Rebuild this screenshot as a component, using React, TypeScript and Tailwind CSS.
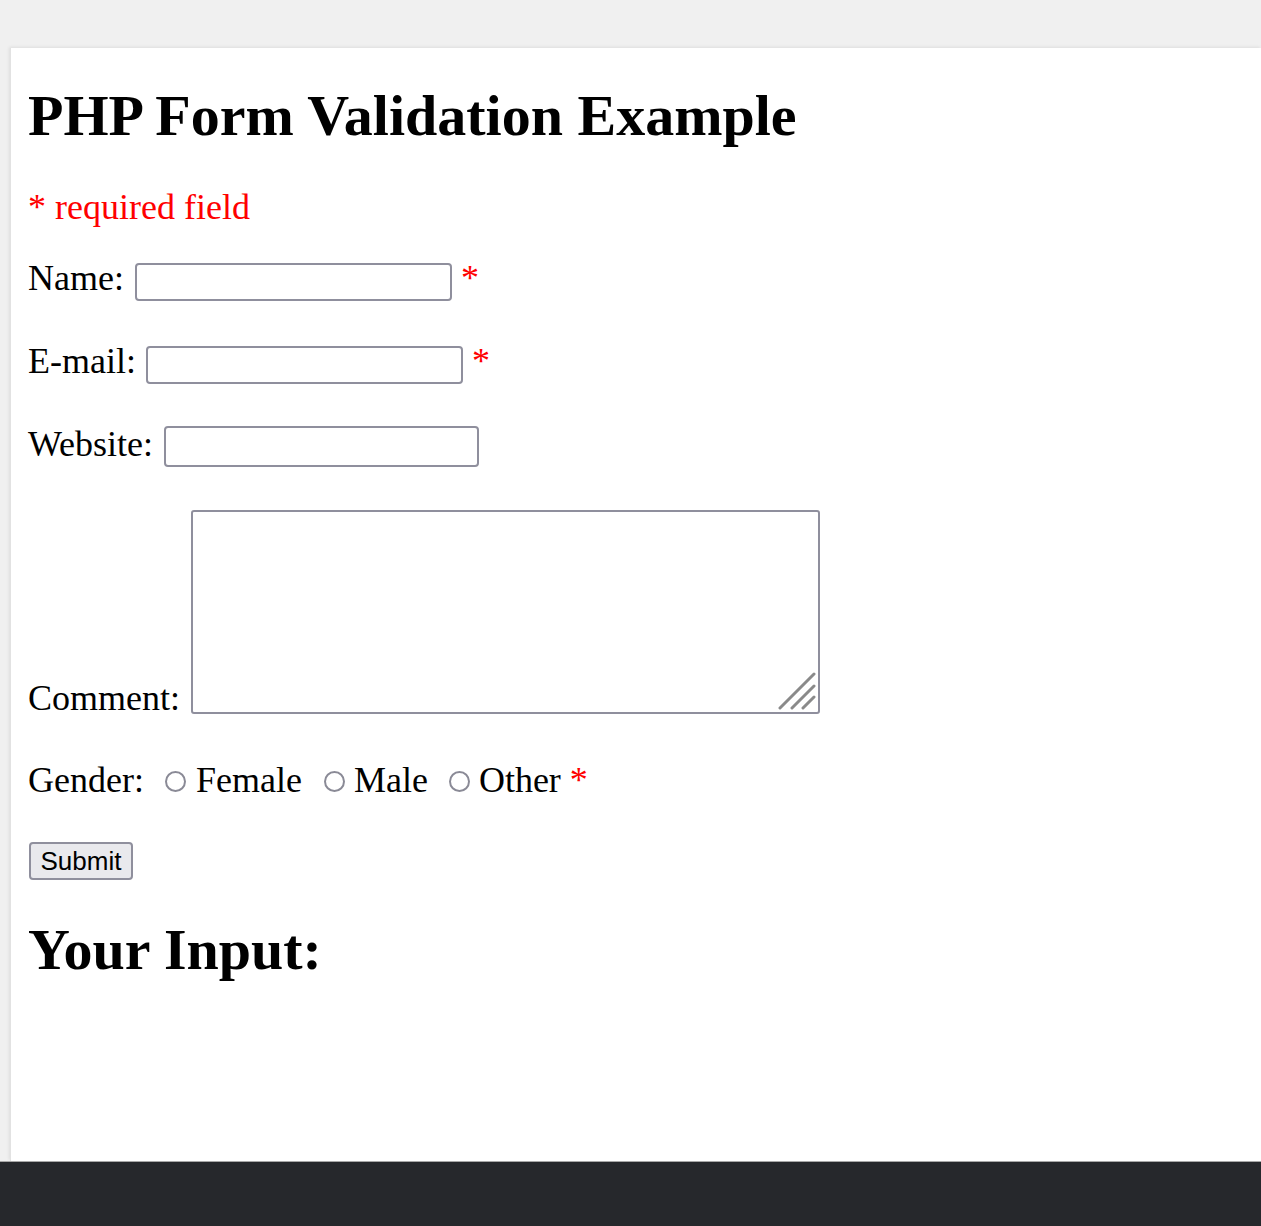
import React from "react";

const serif = "font-['Liberation_Serif','Times_New_Roman',serif]";

function Star({ ml = "ml-[9px]" }: { ml?: string }) {
  return <span className={`${ml} text-[36px] leading-[41px] text-[#ff0000]`}>*</span>;
}

function Radio({ ml }: { ml: string }) {
  return (
    <span
      className={`${ml} mt-[11px] block w-[21px] h-[21px] rounded-full border-2 border-[#8a8a96] bg-white`}
    />
  );
}

export default function App() {
  return (
    <div className={`w-[1261px] h-[1226px] bg-[#f0f0f0] flex flex-col ${serif} text-black`}>
      <div className="h-[48px] shrink-0" />
      <div className="flex h-[1113px] shrink-0">
        <div className="w-[10px] shrink-0 bg-[#f0f0f0]" />
        <div className="flex-1 bg-white border-l border-[#e2e2e2] shadow-[-1px_-1px_3px_rgba(0,0,0,0.08)] pl-[17px] flex flex-col items-start">
          <h2 className="mt-[35px] text-[58px] leading-[66px] font-bold">PHP Form Validation Example</h2>

          <p className="mt-[38px] text-[36px] leading-[41px] text-[#ff0000]">* required field</p>

          <div className="mt-[30px] flex items-start">
            <span className="text-[36px] leading-[41px]">Name:</span>
            <input className="ml-[11px] mt-[5px] w-[317px] h-[38px] border-2 border-[#8f8f9d] rounded-[4px] bg-white outline-none" />
            <Star />
          </div>

          <div className="mt-[40px] flex items-start">
            <span className="text-[36px] leading-[41px]">E-mail:</span>
            <input className="ml-[10px] mt-[5px] w-[317px] h-[38px] border-2 border-[#8f8f9d] rounded-[4px] bg-white outline-none" />
            <Star />
          </div>

          <div className="mt-[40px] flex items-start">
            <span className="text-[36px] leading-[41px]">Website:</span>
            <input className="ml-[11px] mt-[2px] w-[315px] h-[41px] border-2 border-[#8f8f9d] rounded-[4px] bg-white outline-none" />
          </div>

          <div className="mt-[43px] flex items-end">
            <span className="text-[36px] leading-[41px]">Comment:</span>
            <div className="relative ml-[11px] mb-[5px] w-[629px] h-[204px]">
              <textarea className="block w-full h-full resize-none border-2 border-[#8f8f9d] rounded-[3px] bg-white outline-none" />
              <svg className="absolute right-[4px] bottom-[4px]" width="40" height="40" viewBox="0 0 40 40">
                <g stroke="#8a8a8a" strokeWidth="3" strokeLinecap="round">
                  <line x1="4" y1="38" x2="38" y2="4" />
                  <line x1="16" y1="38" x2="38" y2="16" />
                  <line x1="27" y1="38" x2="38" y2="27" />
                </g>
              </svg>
            </div>
          </div>

          <div className="mt-[41px] flex items-start text-[36px] leading-[41px]">
            <span>Gender:</span>
            <Radio ml="ml-[21px]" />
            <span className="ml-[10px]">Female</span>
            <Radio ml="ml-[22px]" />
            <span className="ml-[9px]">Male</span>
            <Radio ml="ml-[21px]" />
            <span className="ml-[9px]">Other</span>
            <Star ml="ml-[9px]" />
          </div>

          <button className="mt-[41px] ml-[1px] w-[104px] h-[38px] border-2 border-[#8f8f9d] rounded-[4px] bg-[#e9e9ed] font-['Liberation_Sans',Arial,sans-serif] text-[26px] leading-none text-black">
            Submit
          </button>

          <h2 className="mt-[37px] text-[58px] leading-[66px] font-bold">Your Input:</h2>
        </div>
      </div>
      <div className="h-[1px] bg-[#a8a8a8] shrink-0" />
      <div className="flex-1 bg-[#26282c]" />
    </div>
  );
}
